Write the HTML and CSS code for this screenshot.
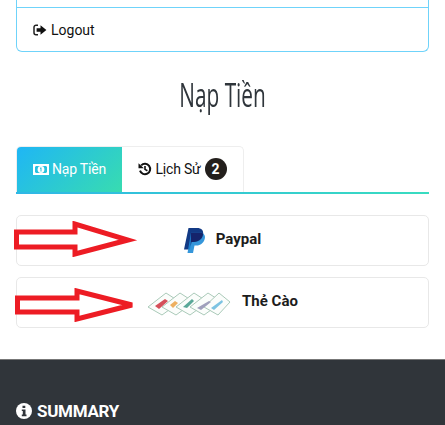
FILE: index.html
```html
<!DOCTYPE html>
<html lang="en">
<head>
  <meta charset="UTF-8" />
  <title>Nạp Tiền</title>
  <link rel="stylesheet" href="styles.css">
</head>
<body>
  <div class="page">
    <!-- Account menu -->
    <div class="menu_card">
      <div class="menu_row"></div>
      <a class="menu_row logout">
        <svg class="icon_logout" viewBox="0 0 14 12" width="14" height="12">
          <path d="M5 1.2H3a2 2 0 0 0-2 2v5.6a2 2 0 0 0 2 2h2" fill="none" stroke="#222" stroke-width="1.5"/>
          <path d="M3.6 4.300H7.500V1.200L13.400 6 7.500 10.800V7.700H3.600z" fill="#111"/>
        </svg>
        Logout
      </a>
    </div>

    <h2 class="page_title"><span>Nạp Tiền</span></h2>

    <!-- Tabs -->
    <div class="tabs">
      <a class="tab active">
        <svg viewBox="0 0 16 11" width="16" height="11">
          <path fill-rule="evenodd" d="M0 0H16V11H0zM3 2 2 3V8L3 9H13L14 8V3L13 2z" fill="#fff"/>
          <circle cx="8" cy="5.500" r="3.400" fill="#fff"/>
          <path d="M7.200 3.600H8.500V7.500H7.500V4.800L7 5z" fill="#2bbfd8"/>
        </svg>
        Nạp Tiền
      </a>
      <a class="tab">
        <svg viewBox="0 0 14 14" width="14" height="14">
          <path d="M3.200 3.400A5.200 5.200 0 1 1 2 8.600" fill="none" stroke="#111" stroke-width="2"/>
          <path d="M0.500 1.200 5.800 6.200H0.500z" fill="#111"/>
          <path d="M7 4V7.400L9.400 8.800" fill="none" stroke="#111" stroke-width="1.600"/>
        </svg>
        Lịch Sử
        <span class="badge">2</span>
      </a>
    </div>
    <div class="tabs_line"></div>

    <!-- Payment methods -->
    <div class="method">
      <svg class="arrow" viewBox="0 0 125 36" width="125" height="36">
        <path d="M2.500 11H61V3L114 19 61 33V26H2.500z" fill="none" stroke="#ed1c24" stroke-width="5"/>
      </svg>
      <svg class="logo_paypal" viewBox="0 0 21 25" width="21" height="25">
        <path d="M4.500 0H13C17.500 0 20 2.500 19 7 18 11.500 14.500 14 10 14H7.500L6 21.500H0z" fill="#123a85"/>
        <path d="M7 4.500H15.500C19.500 4.500 21.800 7 20.700 11 19.600 15 16.500 17.500 12.500 17.500H10.500L9 25H3.500z" fill="#1f8bd6" opacity="0.9"/>
        <path d="M7 4.500H15.500C17 4.500 18.300 4.900 19.200 5.600 18.800 10.700 15 14 10 14H7.500L6.700 18z" fill="#15246b"/>
      </svg>
      <span class="method_name">Paypal</span>
    </div>

    <div class="method">
      <svg class="arrow arrow_two" viewBox="0 0 125 34" width="125" height="34">
        <path d="M2.500 10H62V3L117 17 62 31V24H2.500z" fill="none" stroke="#ed1c24" stroke-width="5"/>
      </svg>
      <svg class="logo_cards" viewBox="0 0 84 26" width="84" height="26">
        <g stroke="#a9c9b8" stroke-width="1" fill="#fbfdfb">
          <path d="M1 17 19 3 33 12 15 25z"/>
          <path d="M15 17 33 3 47 12 29 25z"/>
          <path d="M29 17 47 3 61 12 43 25z"/>
          <path d="M43 17 61 3 75 12 57 25z"/>
          <path d="M57 17 72 3 83 12 71 25z"/>
        </g>
        <path d="M8 16 18 9 21 11 12 19z" fill="#d5505a"/>
        <path d="M23 15 28 11 31 13 26 18z" fill="#edb060"/>
        <path d="M36 17 45 9 47 11 40 18z" fill="#5aa898"/>
        <path d="M50 18 62 11 64 12 54 20z" fill="#a0a0bc"/>
        <path d="M64 18 75 10 76 12 67 20z" fill="#7cc3e2"/>
      </svg>
      <span class="method_name">Thẻ Cào</span>
    </div>
  </div>

  <footer class="footer">
    <h4 class="footer_title">
      <svg viewBox="0 0 16 16" width="16" height="16">
        <circle cx="8" cy="8" r="8" fill="#fff"/>
        <path d="M6.500 2.800H9.300V5H6.500zM5.800 6.400H9.500V11.500H10.500V13.200H5.800V11.500H6.800V8H5.800z" fill="#30353a"/>
      </svg>
      SUMMARY
    </h4>
  </footer>
</body>
</html>
```

FILE: styles.css
```css
* {
  margin: 0;
  padding: 0;
  box-sizing: border-box;
}

body {
  font-family: Roboto, "Liberation Sans", sans-serif;
  background-color: #ffffff;
  color: #111;
  height: 425px;
  overflow: hidden;
}

.page {
  padding: 0 16px 31px;
}

.menu_card {
  height: 52px;
  border: 1px solid #6fd3fa;
  border-top: none;
  border-radius: 0 0 6px 6px;
}

.menu_row {
  display: flex;
  align-items: center;
  gap: 4px;
  height: 7px;
  padding-left: 16px;
  font-size: 14px;
}

.logout {
  height: 44px;
  border-top: 1px solid #6fd3fa;
}

.page_title {
  margin-top: 24px;
  height: 38px;
  text-align: center;
  font-family: "Open Sans", Roboto, sans-serif;
  font-size: 32px;
  font-weight: 500;
  line-height: 38px;
  color: #2f353b;
}

.page_title span {
  display: inline-block;
  transform: scaleX(0.65);
}

.tabs {
  display: flex;
  width: 228px;
  height: 46px;
  margin-top: 32px;
  border: 1px solid #eee;
  border-bottom: none;
  border-radius: 5px 5px 0 0;
}

.tab {
  display: flex;
  align-items: center;
  justify-content: center;
  gap: 3px;
  padding-bottom: 1px;
  font-size: 14px;
  letter-spacing: -0.2px;
}

.tab:first-child {
  width: 105px;
  border-radius: 4px 0 0 0;
}

.tab:last-child {
  flex: 1;
}

.tab.active {
  background: linear-gradient(135deg, #1fb6f5, #38dcb0);
  color: #ffffff;
}

.badge {
  display: inline-block;
  width: 22px;
  height: 22px;
  margin-left: 1px;
  border-radius: 50%;
  background-color: #231f1c;
  color: #ffffff;
  font-size: 14px;
  font-weight: 700;
  line-height: 22px;
  text-align: center;
}

.tabs_line {
  height: 2px;
  background: linear-gradient(90deg, #2fb7e6, #38dcc0);
}

.method {
  position: relative;
  display: flex;
  align-items: center;
  justify-content: center;
  gap: 11px;
  height: 51px;
  margin-top: 21px;
  border: 1px solid #e8e8e8;
  border-radius: 5px;
}

.method + .method {
  margin-top: 11px;
}

.method_name {
  margin-bottom: 3px;
  font-size: 15px;
  font-weight: 700;
  color: #1c1c1c;
}

.arrow {
  position: absolute;
  left: -3px;
  top: 5px;
}

.arrow_two {
  left: -2px;
  top: 10px;
}

.logo_cards {
  filter: blur(0.5px);
}

.footer {
  height: 66px;
  padding: 41px 16px 0;
  background-color: #30353a;
  border-top: 1px solid #777;
}

.footer_title {
  display: flex;
  align-items: center;
  gap: 5px;
  font-size: 17px;
  font-weight: 700;
  letter-spacing: -0.3px;
  color: #ffffff;
}
```
